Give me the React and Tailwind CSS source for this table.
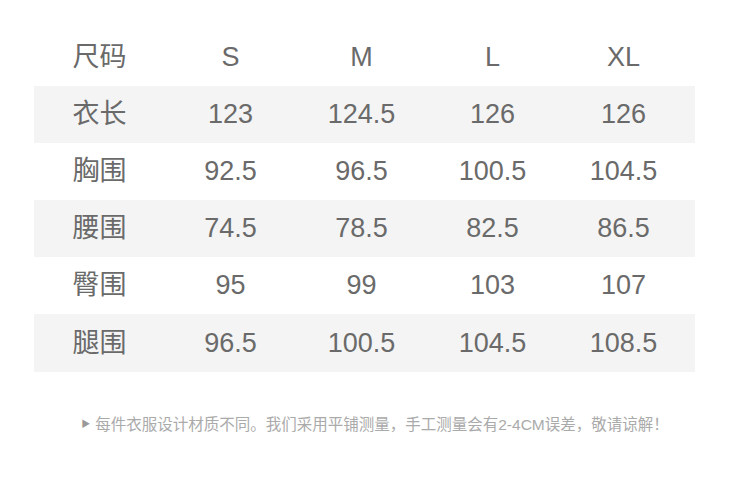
import React from 'react';

const rows = [
  ['衣长', '123', '124.5', '126', '126'],
  ['胸围', '92.5', '96.5', '100.5', '104.5'],
  ['腰围', '74.5', '78.5', '82.5', '86.5'],
  ['臀围', '95', '99', '103', '107'],
  ['腿围', '96.5', '100.5', '104.5', '108.5'],
];

const font = { fontFamily: '"Liberation Sans", "Noto Sans CJK SC", sans-serif' };

const Row = ({ cells, shaded }) => (
  <div className={`grid grid-cols-[131px_131px_131px_131px_131px] h-[57.2px] items-center text-[27px] text-[#6a6a6a] ${shaded ? 'bg-[#f4f4f4]' : ''}`}>
    {cells.map((c, i) => (
      <div key={i} className="text-center leading-none">{c}</div>
    ))}
  </div>
);

export default function App() {
  return (
    <div className="w-[750px] h-[491px] bg-white" style={font}>
      <div className="ml-[34px] mr-[55px] pt-[28.5px]">
        <Row cells={['尺码', 'S', 'M', 'L', 'XL']} />
        {rows.map((r, i) => (
          <Row key={r[0]} cells={r} shaded={i % 2 === 0} />
        ))}
      </div>
      <div className="mt-[41px] flex items-center justify-center gap-[5px] text-[15.5px] text-[#aaa] pl-[0px]">
        <span className="text-[9px] text-[#999]">▶</span>
        <span>每件衣服设计材质不同。我们采用平铺测量，手工测量会有2-4CM误差，敬请谅解！</span>
      </div>
    </div>
  );
}
